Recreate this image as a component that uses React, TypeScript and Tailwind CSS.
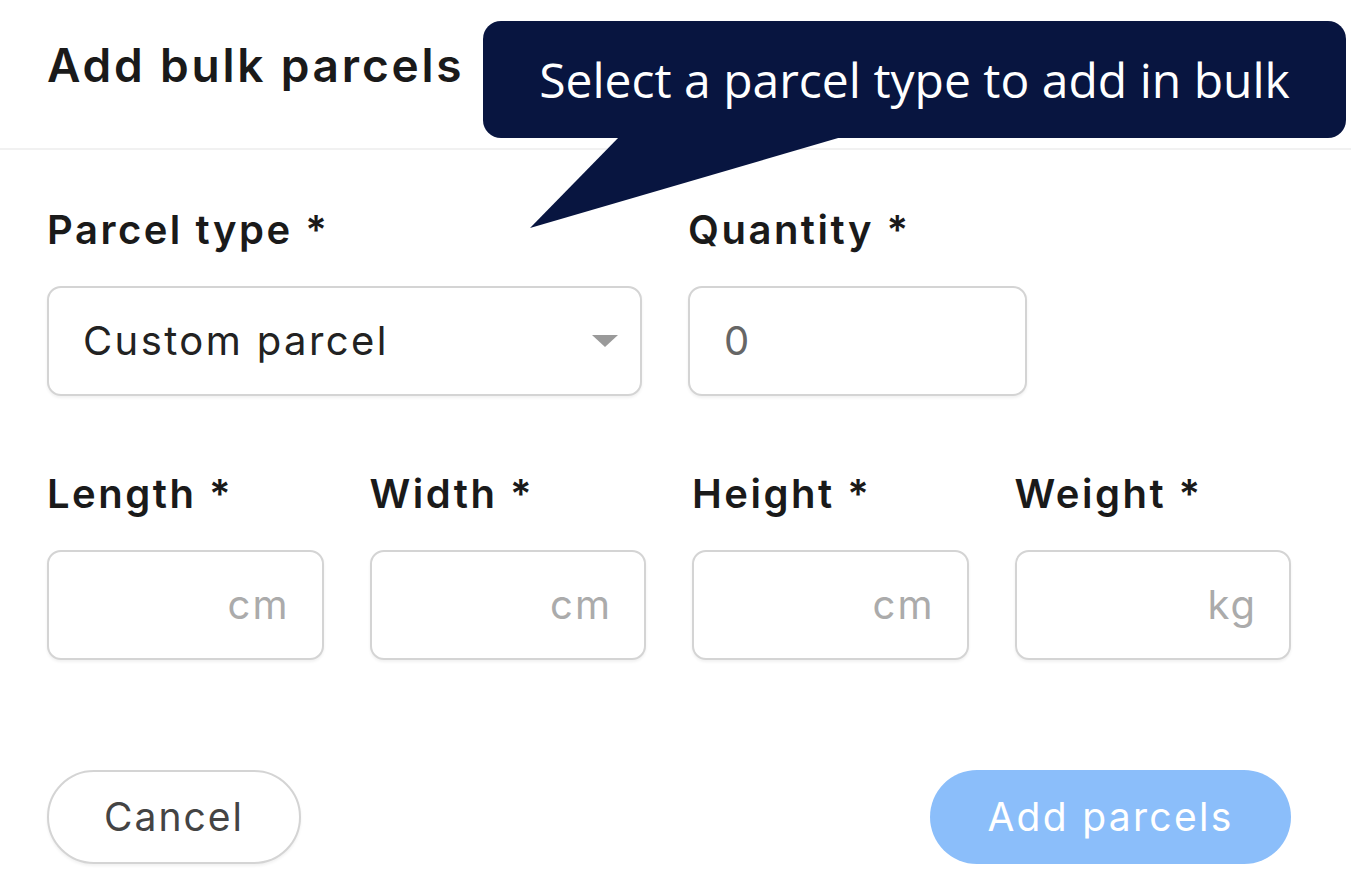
import React from 'react';

const font = { fontFamily: 'Inter, "Noto Sans", sans-serif' };

const Label = ({ children }: { children: React.ReactNode }) => (
  <label className="block text-[40px] font-semibold leading-none text-[#1a1a1a] tracking-[2.5px]">{children}</label>
);

const UnitInput = ({ label, unit }: { label: string; unit: string }) => (
  <div className="flex flex-col gap-[36px]">
    <Label>{label}</Label>
    <div className="flex h-[110px] items-center justify-end rounded-[14px] border-2 border-[#d4d4d4] bg-white pr-[32px] shadow-[0_2px_3px_rgba(0,0,0,0.06)]">
      <span className="text-[40px] tracking-[2px] text-[#ababab]">{unit}</span>
    </div>
  </div>
);

const BulkParcelsModal = () => {
  return (
    <div className="relative min-h-screen w-full bg-white" style={font}>
      {/* Header */}
      <div className="h-[150px] border-b-2 border-[#f1f1f1] px-[47px] pt-[42px]">
        <h1 className="text-[46px] font-semibold leading-none text-[#1a1a1a] tracking-[2.8px]">Add bulk parcels</h1>
      </div>

      {/* Body */}
      <div className="px-[47px] pt-[60px]">
        <div className="flex gap-[46px]">
          <div className="flex w-[595px] flex-col gap-[36px]">
            <Label>Parcel type *</Label>
            <div className="flex h-[110px] items-center justify-between rounded-[14px] border-2 border-[#d4d4d4] bg-white pl-[34px] pr-[22px] shadow-[0_2px_3px_rgba(0,0,0,0.06)]">
              <span className="text-[40px] tracking-[2.4px] text-[#222]">Custom parcel</span>
              <svg width="26" height="12" viewBox="0 0 26 12">
                <polygon points="0,0 26,0 13,12" fill="#9a9a9a" />
              </svg>
            </div>
          </div>
          <div className="flex w-[339px] flex-col gap-[36px]">
            <Label>Quantity *</Label>
            <div className="flex h-[110px] items-center rounded-[14px] border-2 border-[#d4d4d4] bg-white pl-[34px] shadow-[0_2px_3px_rgba(0,0,0,0.06)]">
              <span className="text-[40px] text-[#666]">0</span>
            </div>
          </div>
        </div>

        <div className="mt-[78px] grid w-[1244px] grid-cols-4 gap-x-[46px]">
          <UnitInput label="Length *" unit="cm" />
          <UnitInput label="Width *" unit="cm" />
          <UnitInput label="Height *" unit="cm" />
          <UnitInput label="Weight *" unit="kg" />
        </div>

        <div className="mt-[110px] flex w-[1244px] items-center justify-between">
          <button className="flex h-[94px] w-[254px] items-center justify-center rounded-full border-2 border-[#d4d4d4] bg-white text-[39px] tracking-[2px] text-[#444] shadow-[0_2px_3px_rgba(0,0,0,0.06)]">
            Cancel
          </button>
          <button className="flex h-[94px] w-[361px] items-center justify-center rounded-full bg-[#8bbefa] text-[39px] tracking-[2.3px] text-white">
            Add parcels
          </button>
        </div>
      </div>

      {/* Tooltip callout */}
      <div className="absolute left-[483px] top-[21px] flex h-[117px] w-[863px] items-center justify-center rounded-[18px] bg-[#081540]">
        <span className="text-[48px] leading-none text-white" style={{ fontFamily: '"Open Sans", sans-serif' }}>
          Select a parcel type to add in bulk
        </span>
      </div>
      <svg className="absolute left-0 top-0" width="1351" height="240" viewBox="0 0 1351 240">
        <polygon points="620,136 845,136 530,228" fill="#081540" />
      </svg>
    </div>
  );
};

export default BulkParcelsModal;
